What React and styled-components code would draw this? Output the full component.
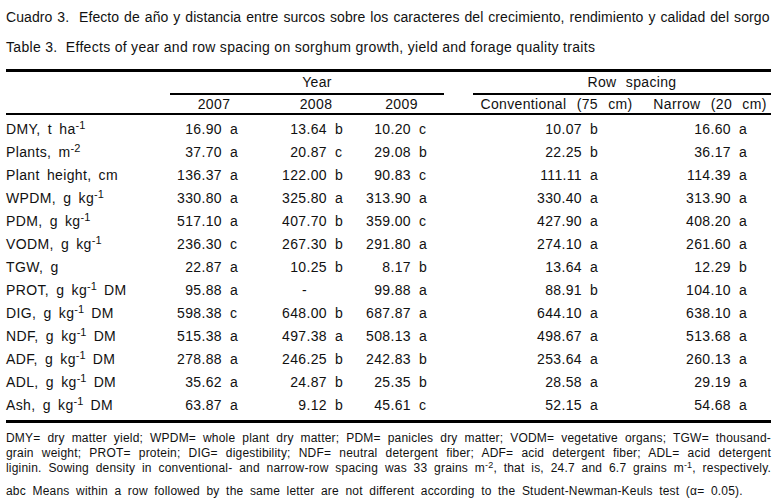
import React from "react";
import styled, { createGlobalStyle } from "styled-components";

const Global = createGlobalStyle`
  html, body { margin: 0; padding: 0; background: #fff; }
  body { font-family: "Liberation Sans", Arial, sans-serif; color: #111; }
`;

const Page = styled.div`
  width: 765px;
  padding-left: 6px;
`;

const Caption = styled.div`
  font-size: 14px;
  line-height: 16px;
  margin-top: ${(p) => p.$mt}px;
  white-space: nowrap;
  letter-spacing: ${(p) => p.$ls}px;
  word-spacing: ${(p) => p.$ws}px;
`;

const Table = styled.div`
  margin-top: 14px;
  border-top: 3px solid #000;
  border-bottom: 3px solid #000;
  font-size: 14px;
  letter-spacing: 0.35px;
`;

const COLS = "164px 95px 94px 85px 29px 167px 131px";

const HeadRow = styled.div`
  display: grid;
  grid-template-columns: ${COLS};
  border-bottom: ${(p) => (p.$rule ? "2px solid #000" : "none")};
`;

const GroupHead = styled.div`
  grid-column: ${(p) => p.$span};
  text-align: center;
  line-height: 21px;
  padding-left: 20px;
  border-bottom: 2px solid #000;
  word-spacing: 5px;
`;

const SubHead = styled.div`
  text-align: center;
  line-height: 18px;
  padding-left: ${(p) => p.$pl || 0}px;
  padding-right: ${(p) => p.$pr || 0}px;
  white-space: nowrap;
  word-spacing: 6px;
`;

const Body = styled.div`
  padding: 3px 0 3px;
`;

const DataRow = styled.div`
  display: grid;
  grid-template-columns: ${COLS};
  height: 23px;
  line-height: 23px;
`;

const Label = styled.div`
  white-space: nowrap;
  word-spacing: 3px;
  sup {
    font-size: 11px;
    line-height: 0;
    vertical-align: 5px;
    word-spacing: 0;
    letter-spacing: 0;
  }
`;

const Value = styled.div`
  text-align: right;
  padding-right: ${(p) => p.$pr}px;
  white-space: nowrap;
`;

const Letter = styled.span`
  display: inline-block;
  width: 8px;
  margin-left: 8px;
  text-align: left;
`;

const Dash = styled.span`
  display: inline-block;
  padding-right: 20px;
`;

const Notes = styled.div`
  font-size: 12px;
  line-height: 15px;
  margin-top: 8px;
  letter-spacing: 0.2px;
  white-space: nowrap;
  text-align: ${(p) => (p.$last ? "left" : "justify")};
  text-align-last: ${(p) => (p.$last ? "left" : "justify")};
  word-spacing: ${(p) => (p.$last ? 3 : 0)}px;
  sup { font-size: 9px; line-height: 0; vertical-align: 4px; }
`;

const Spacer = styled.div``;

const PR = [27, 16, 17, 42, 24];

const rows = [
  ["DMY, t ha", "-1", "", ["16.90 a", "13.64 b", "10.20 c", "10.07 b", "16.60 a"]],
  ["Plants, m", "-2", "", ["37.70 a", "20.87 c", "29.08 b", "22.25 b", "36.17 a"]],
  ["Plant height, cm", "", "", ["136.37 a", "122.00 b", "90.83 c", "111.11 a", "114.39 a"]],
  ["WPDM, g kg", "-1", "", ["330.80 a", "325.80 a", "313.90 a", "330.40 a", "313.90 a"]],
  ["PDM, g kg", "-1", "", ["517.10 a", "407.70 b", "359.00 c", "427.90 a", "408.20 a"]],
  ["VODM, g kg", "-1", "", ["236.30 c", "267.30 b", "291.80 a", "274.10 a", "261.60 a"]],
  ["TGW, g", "", "", ["22.87 a", "10.25 b", "8.17 b", "13.64 a", "12.29 b"]],
  ["PROT, g kg", "-1", " DM", ["95.88 a", "-", "99.88 a", "88.91 b", "104.10 a"]],
  ["DIG, g kg", "-1", " DM", ["598.38 c", "648.00 b", "687.87 a", "644.10 a", "638.10 a"]],
  ["NDF, g kg", "-1", " DM", ["515.38 a", "497.38 a", "508.13 a", "498.67 a", "513.68 a"]],
  ["ADF, g kg", "-1", " DM", ["278.88 a", "246.25 b", "242.83 b", "253.64 a", "260.13 a"]],
  ["ADL, g kg", "-1", " DM", ["35.62 a", "24.87 b", "25.35 b", "28.58 a", "29.19 a"]],
  ["Ash, g kg", "-1", " DM", ["63.87 a", "9.12 b", "45.61 c", "52.15 a", "54.68 a"]],
];

function Cell({ v, pr }) {
  if (v === "-") {
    return (
      <Value $pr={pr}>
        <Dash>-</Dash>
        <Letter />
      </Value>
    );
  }
  const [num, letter] = v.split(" ");
  return (
    <Value $pr={pr}>
      {num}
      <Letter>{letter}</Letter>
    </Value>
  );
}

export default function App() {
  return (
    <>
      <Global />
      <Page>
        <Caption $mt={9} $ws={1} $ls={0.07}>
          Cuadro 3.&nbsp; Efecto de año y distancia entre surcos sobre los caracteres del crecimiento, rendimiento y calidad del sorgo
        </Caption>
        <Caption $mt={14} $ws={0} $ls={0.3}>
          Table 3.&nbsp; Effects of year and row spacing on sorghum growth, yield and forage quality traits
        </Caption>
        <Table>
          <HeadRow>
            <Spacer />
            <GroupHead $span="2 / 5">Year</GroupHead>
            <Spacer />
            <GroupHead $span="6 / 8">Row spacing</GroupHead>
          </HeadRow>
          <HeadRow $rule>
            <Spacer />
            <SubHead $pr={7}>2007</SubHead>
            <SubHead $pl={8}>2008</SubHead>
            <SubHead>2009</SubHead>
            <Spacer />
            <SubHead>Conventional (75 cm)</SubHead>
            <SubHead $pl={9}>Narrow (20 cm)</SubHead>
          </HeadRow>
          <Body>
            {rows.map(([lab, sup, tail, vals]) => (
              <DataRow key={lab}>
                <Label>
                  {lab}
                  {sup && <sup>{sup}</sup>}
                  {tail}
                </Label>
                <Cell v={vals[0]} pr={PR[0]} />
                <Cell v={vals[1]} pr={PR[1]} />
                <Cell v={vals[2]} pr={PR[2]} />
                <Spacer />
                <Cell v={vals[3]} pr={PR[3]} />
                <Cell v={vals[4]} pr={PR[4]} />
              </DataRow>
            ))}
          </Body>
        </Table>
        <Notes>
          DMY= dry matter yield; WPDM= whole plant dry matter; PDM= panicles dry matter; VODM= vegetative organs; TGW= thousand-
          <br />
          grain weight; PROT= protein; DIG= digestibility; NDF= neutral detergent fiber; ADF= acid detergent fiber; ADL= acid detergent
          <br />
          liginin. Sowing density in conventional- and narrow-row spacing was 33 grains m<sup>-2</sup>, that is, 24.7 and 6.7 grains m<sup>-1</sup>, respectively.
        </Notes>
        <Notes $last>
          abc Means within a row followed by the same letter are not different according to the Student-Newman-Keuls test (α= 0.05).
        </Notes>
      </Page>
    </>
  );
}
